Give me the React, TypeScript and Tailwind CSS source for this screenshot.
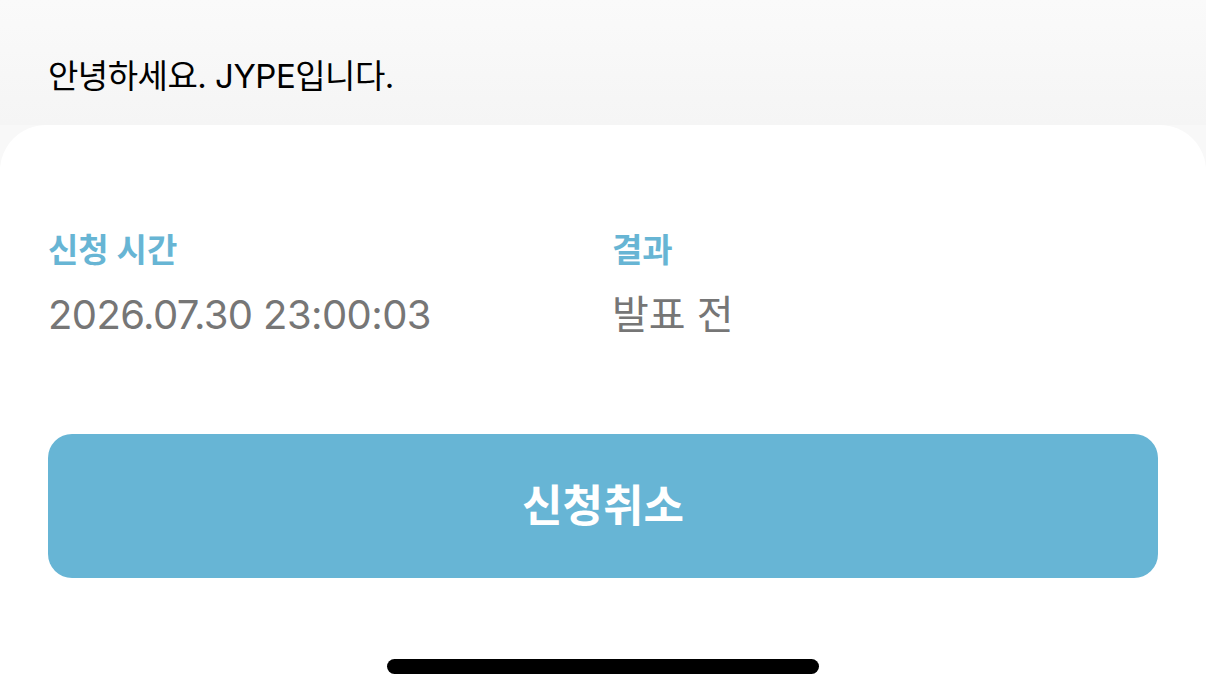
export default function App() {
  return (
    <div
      className="h-[698px] w-[1206px] overflow-hidden bg-[#f8f8f8] flex flex-col"
      style={{ fontFamily: 'Inter, "Noto Sans CJK KR", "Noto Sans", sans-serif' }}
    >
      <div className="h-[125px] px-12 pt-[54px] bg-gradient-to-b from-[#fafafa] to-[#f5f5f5]">
        <p className="text-[33px] leading-[44px] text-black tracking-[-0.5px]">안녕하세요. JYPE입니다.</p>
      </div>
      <div className="flex-1 bg-white rounded-t-[46px] px-12 pt-[102px] flex flex-col">
        <div className="flex">
          <div className="w-[564px] flex flex-col">
            <p className="text-[33px] leading-[46px] font-bold text-[#67b5d4]">신청 시간</p>
            <p className="mt-[16px] text-[40px] leading-[52px] text-[#767676] tracking-[-0.6px]">2026.07.30 23:00:03</p>
          </div>
          <div className="flex flex-col">
            <p className="text-[33px] leading-[46px] font-bold text-[#67b5d4]">결과</p>
            <p className="mt-[16px] text-[40px] leading-[52px] text-[#767676]">발표 전</p>
          </div>
        </div>
        <button className="mt-[93px] h-[144px] w-full rounded-[24px] bg-[#67b5d5] text-white text-[44px] font-bold">
          신청취소
        </button>
        <div className="mt-[81px] flex justify-center">
          <div className="h-[15px] w-[432px] rounded-full bg-black" />
        </div>
      </div>
    </div>
  );
}
